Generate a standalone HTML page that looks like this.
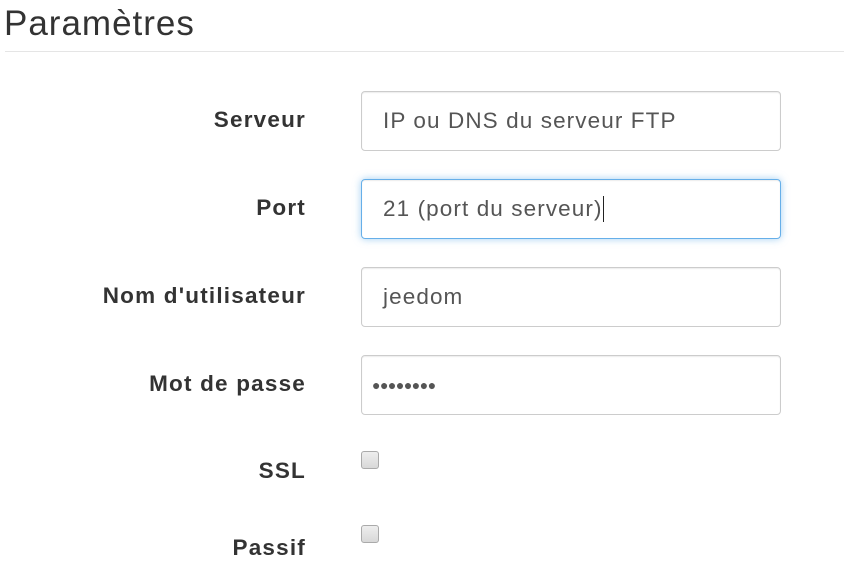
<!DOCTYPE html>
<html><head><meta charset="utf-8"><style>
body{margin:0;width:844px;height:584px;background:#fff;font-family:"Liberation Sans",sans-serif;color:#333;position:relative;overflow:hidden}
.t{position:absolute;left:4px;top:4px;font-size:35px;letter-spacing:1px;color:#333}
.hr{position:absolute;left:5px;right:0;top:51px;border-top:1px solid #e5e5e5}
.l{position:absolute;right:538px;font-size:22.5px;letter-spacing:1.2px;font-weight:bold;color:#333;white-space:nowrap}
.i{position:absolute;left:361px;height:58px;border:1px solid #ccc;border-radius:4px;font-size:22.5px;letter-spacing:1.1px;color:#555;line-height:58px;padding-left:21px;width:397px;box-shadow:inset 0 1px 1px rgba(0,0,0,.075);white-space:nowrap}
.f{border-color:#66afe9;box-shadow:inset 0 1px 1px rgba(0,0,0,.075),0 0 8px rgba(102,175,233,.6)}
.c{position:absolute;left:361px;width:16px;height:16px;border:1px solid #aaa;border-radius:3px;background:linear-gradient(#eee,#d8d8d8)}
.cur{display:inline-block;width:1px;height:26px;background:#222;vertical-align:-6px}
</style></head><body>
<div class="t">Paramètres</div><div class="hr"></div>
<div class="l" style="top:107px">Serveur</div>
<div class="i" style="top:91px">IP ou DNS du serveur FTP</div>
<div class="l" style="top:195px">Port</div>
<div class="i f" style="top:179px">21 (port du serveur)<span class="cur"></span></div>
<div class="l" style="top:283px">Nom d'utilisateur</div>
<div class="i" style="top:267px">jeedom</div>
<div class="l" style="top:371px">Mot de passe</div>
<div class="i" style="top:355px;padding-left:10px;width:408px;font-size:14px;letter-spacing:-0.5px">●●●●●●●●</div>
<div class="l" style="top:458px">SSL</div>
<div class="c" style="top:451px"></div>
<div class="l" style="top:535px">Passif</div>
<div class="c" style="top:525px"></div>
</body></html>
